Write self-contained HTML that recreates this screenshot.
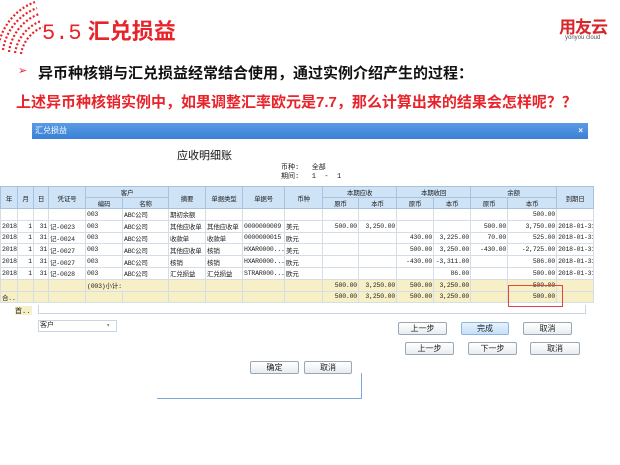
<!DOCTYPE html>
<html><head><meta charset="utf-8"><style>
*{margin:0;padding:0;box-sizing:border-box}
body{width:620px;height:465px;background:#fff;position:relative;overflow:hidden;font-family:"Liberation Sans","Noto Sans CJK SC",sans-serif}
.abs{position:absolute}
.t{font-size:8px;color:#222;white-space:nowrap;font-family:"Liberation Mono","Noto Sans CJK SC",monospace}
table{border-collapse:collapse;position:absolute;left:0;top:186px;width:593px;table-layout:fixed;font-size:6.5px;letter-spacing:-0.2px;font-family:"Liberation Mono","Noto Sans CJK SC",monospace}
td{border:1px solid #d6dde6;height:11.8px;padding:0 1px;white-space:nowrap;overflow:hidden;color:#222}
thead td{background:#cfe3f7;border-color:#a9c3df;text-align:center;height:11px}
.y td{background:#f7f0c6}
.r{text-align:right}
.btn{position:absolute;height:13px;border:1px solid #9aa7b5;border-radius:2px;background:linear-gradient(#fff,#e8ecf0);font-size:8px;text-align:center;line-height:11px;color:#222}
</style></head><body>
<svg class="abs" style="left:0;top:0" width="80" height="70">
<g fill="none" stroke="#e8232a" stroke-width="2.2" stroke-dasharray="2 2">
<path d="M21 54 A35 35 0 0 1 43 27"/>
<path d="M15 53 A41 41 0 0 1 41 21"/>
<path d="M9 52 A47 47 0 0 1 39 14"/>
<path d="M3 50 A53 53 0 0 1 37 8"/>
<path d="M-2 48 A58 58 0 0 1 35 2"/>
</g></svg>
<div class="abs" style="left:42px;top:14px;font-size:22px;color:#e8232a;font-weight:bold;font-family:'Liberation Sans','Noto Sans CJK SC',sans-serif"><span style="font-weight:normal;font-family:'Liberation Mono',monospace">5.5</span> 汇兑损益</div>
<div class="abs" style="left:559px;top:13px;font-size:17px;font-weight:bold;color:#d8262d;letter-spacing:-1px">用友云</div>
<div class="abs" style="left:565px;top:35px;font-size:6px;color:#555">yonyou cloud</div>
<div class="abs" style="left:18px;top:64px;font-size:11px;color:#e8232a">➢</div>
<div class="abs" style="left:38px;top:62px;font-size:15px;font-weight:bold;color:#111">异币种核销与汇兑损益经常结合使用，通过实例介绍产生的过程：</div>
<div class="abs" style="left:16px;top:91px;font-size:15px;font-weight:bold;color:#e8232a">上述异币种核销实例中，如果调整汇率欧元是7.7，那么计算出来的结果会怎样呢？？</div>
<div class="abs" style="left:32px;top:123px;width:556px;height:16px;background:linear-gradient(#5a9be6,#3a7fd6);color:#fff;font-size:8px;line-height:16px;padding-left:3px">汇兑损益<span style="position:absolute;right:5px;font-weight:bold">×</span></div>
<div class="abs" style="left:177px;top:147px;font-size:11px;color:#111">应收明细账</div>
<div class="abs t" style="left:281px;top:162px;font-size:7px">币种:&nbsp;&nbsp;&nbsp;全部</div>
<div class="abs t" style="left:281px;top:171px;font-size:7px">期间:&nbsp;&nbsp;&nbsp;1 &nbsp;- &nbsp;1</div>
<table>
<colgroup><col style="width:17px"><col style="width:16px"><col style="width:15px"><col style="width:37px"><col style="width:37px"><col style="width:46px"><col style="width:37px"><col style="width:37px"><col style="width:42px"><col style="width:38px"><col style="width:36px"><col style="width:38px"><col style="width:37px"><col style="width:37px"><col style="width:37px"><col style="width:49px"><col style="width:37px"></colgroup>
<thead>
<tr><td rowspan="2">年</td><td rowspan="2">月</td><td rowspan="2">日</td><td rowspan="2">凭证号</td><td colspan="2">客户</td><td rowspan="2">摘要</td><td rowspan="2">单据类型</td><td rowspan="2">单据号</td><td rowspan="2">币种</td><td colspan="2">本期应收</td><td colspan="2">本期收回</td><td colspan="2">余额</td><td rowspan="2">到期日</td></tr>
<tr><td>编码</td><td>名称</td><td>原币</td><td>本币</td><td>原币</td><td>本币</td><td>原币</td><td>本币</td></tr>
</thead>
<tbody>
<tr><td></td><td></td><td></td><td></td><td>003</td><td>ABC公司</td><td>期初余额</td><td></td><td></td><td></td><td></td><td></td><td></td><td></td><td></td><td class="r">500.00</td><td></td></tr>
<tr><td class="r">2018</td><td class="r">1</td><td class="r">31</td><td>记-0023</td><td>003</td><td>ABC公司</td><td>其他应收单</td><td>其他应收单</td><td>0000000009</td><td>美元</td><td class="r">500.00</td><td class="r">3,250.00</td><td></td><td></td><td class="r">500.00</td><td class="r">3,750.00</td><td>2018-01-31</td></tr>
<tr><td class="r">2018</td><td class="r">1</td><td class="r">31</td><td>记-0024</td><td>003</td><td>ABC公司</td><td>收款单</td><td>收款单</td><td>0000000015</td><td>欧元</td><td></td><td></td><td class="r">430.00</td><td class="r">3,225.00</td><td class="r">70.00</td><td class="r">525.00</td><td>2018-01-31</td></tr>
<tr><td class="r">2018</td><td class="r">1</td><td class="r">31</td><td>记-0027</td><td>003</td><td>ABC公司</td><td>其他应收单</td><td>核销</td><td>HXAR0000...</td><td>美元</td><td></td><td></td><td class="r">500.00</td><td class="r">3,250.00</td><td class="r">-430.00</td><td class="r">-2,725.00</td><td>2018-01-31</td></tr>
<tr><td class="r">2018</td><td class="r">1</td><td class="r">31</td><td>记-0027</td><td>003</td><td>ABC公司</td><td>核销</td><td>核销</td><td>HXAR0000...</td><td>欧元</td><td></td><td></td><td class="r">-430.00</td><td class="r">-3,311.00</td><td></td><td class="r">586.00</td><td>2018-01-31</td></tr>
<tr><td class="r">2018</td><td class="r">1</td><td class="r">31</td><td>记-0028</td><td>003</td><td>ABC公司</td><td>汇兑损益</td><td>汇兑损益</td><td>STRAR000...</td><td>欧元</td><td></td><td></td><td></td><td class="r">86.00</td><td></td><td class="r">500.00</td><td>2018-01-31</td></tr>
<tr class="y"><td></td><td></td><td></td><td></td><td colspan="2">(003)小计:</td><td></td><td></td><td></td><td></td><td class="r">500.00</td><td class="r">3,250.00</td><td class="r">500.00</td><td class="r">3,250.00</td><td></td><td class="r">500.00</td><td></td></tr>
<tr class="y"><td>合...</td><td></td><td></td><td></td><td></td><td></td><td></td><td></td><td></td><td></td><td class="r">500.00</td><td class="r">3,250.00</td><td class="r">500.00</td><td class="r">3,250.00</td><td></td><td class="r">500.00</td><td></td></tr>
</tbody></table>
<div class="abs" style="left:508px;top:285px;width:55px;height:22px;border:1.5px solid #e0453f"></div>
<div class="abs t" style="left:15px;top:306px;width:17px;height:9px;background:#f7f0c6;font-size:7px">首..</div>
<div class="abs" style="left:38px;top:305px;width:548px;height:9px;border:1px solid #c9d5e2;border-top:none"></div>
<div class="abs t" style="left:38px;top:320px;width:79px;height:12px;border:1px solid #c9d5e2;font-size:7px;padding-left:1px;line-height:10px">客户<span style="position:absolute;right:6px;color:#666;font-size:6px">▾</span></div>
<div class="btn" style="left:398px;top:322px;width:49px">上一步</div>
<div class="btn" style="left:461px;top:322px;width:48px;background:linear-gradient(#e6f2fd,#c5e0f8);border-color:#8db6de">完成</div>
<div class="btn" style="left:523px;top:322px;width:49px">取消</div>
<div class="btn" style="left:405px;top:342px;width:49px">上一步</div>
<div class="btn" style="left:468px;top:342px;width:49px">下一步</div>
<div class="btn" style="left:530px;top:342px;width:50px">取消</div>
<div class="btn" style="left:250px;top:361px;width:49px">确定</div>
<div class="btn" style="left:304px;top:361px;width:48px">取消</div>
<div class="abs" style="left:157px;top:373px;width:205px;height:26px;border-right:1px solid #7aa7dc;border-bottom:1px solid #7aa7dc"></div>
</body></html>
